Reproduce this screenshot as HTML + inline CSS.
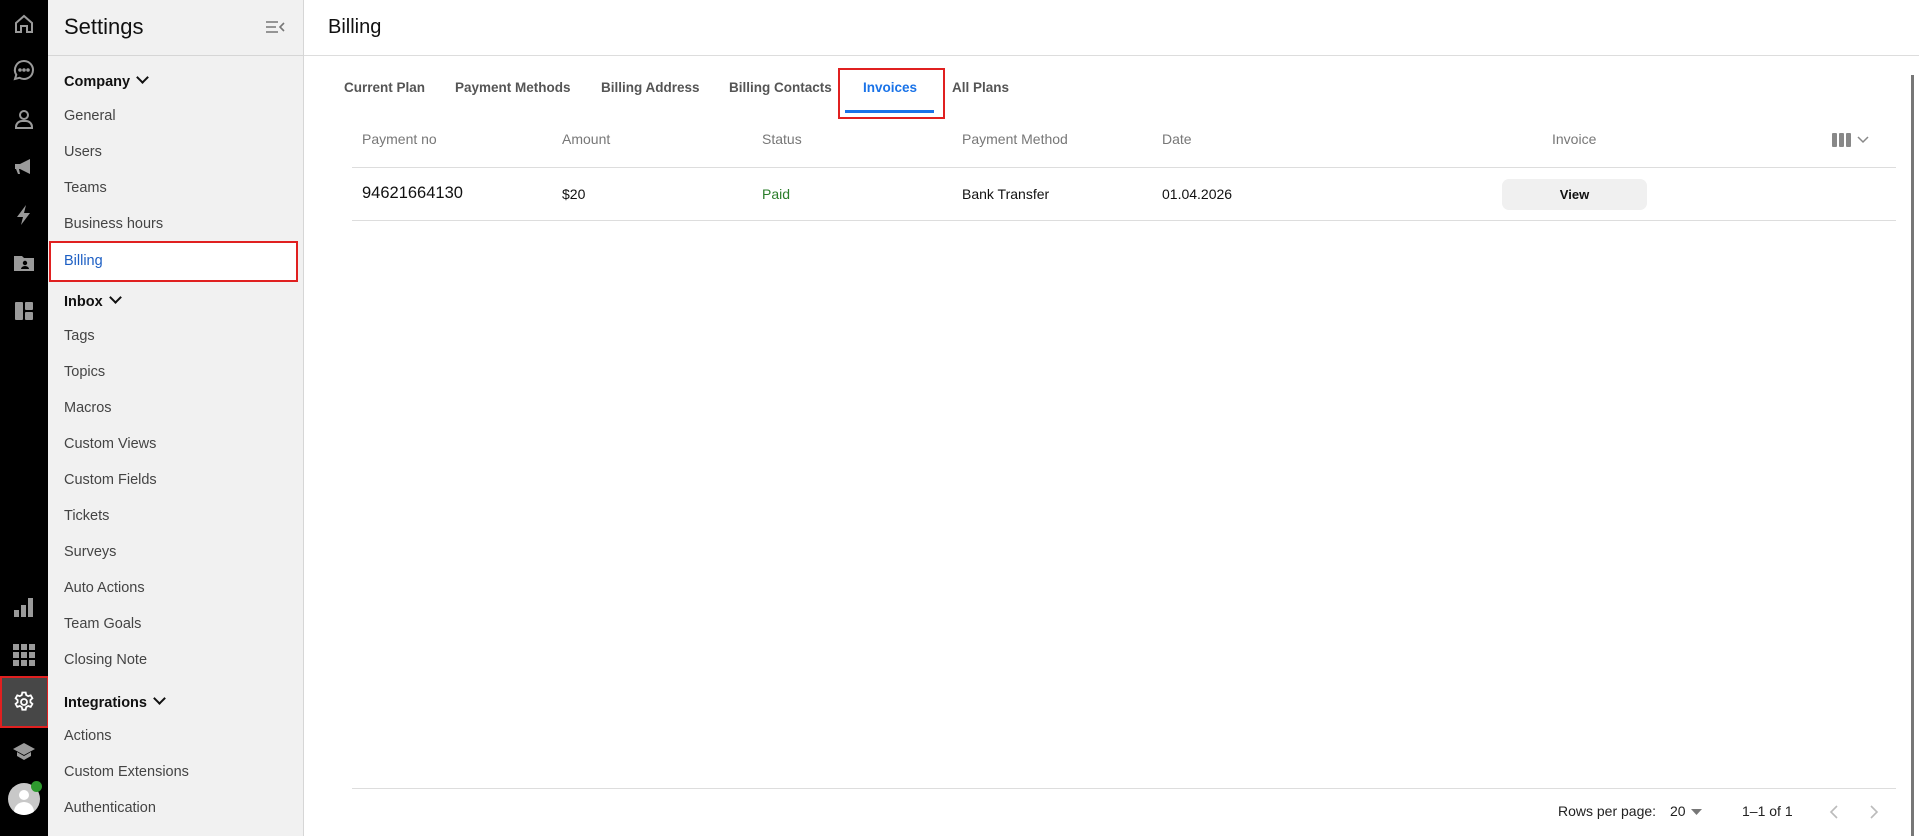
<!DOCTYPE html>
<html><head><meta charset="utf-8"><style>
*{box-sizing:border-box;margin:0;padding:0}
body{width:1919px;height:836px;overflow:hidden;font-family:"Liberation Sans",Arial,sans-serif;background:#fff;position:relative;color:#222}
.rail{position:absolute;left:0;top:0;width:48px;height:836px;background:#000}
.rail svg{position:absolute;left:12px}
.side{position:absolute;left:48px;top:0;width:256px;height:836px;background:#f1f1f1;border-right:1px solid #d6d6d6}
.side h1{position:absolute;left:16px;top:14px;font-size:22px;font-weight:normal;color:#111}
.side .hd{position:absolute;left:0;top:55px;width:255px;border-top:1px solid #d6d6d6}
.it{position:absolute;left:16px;font-size:14.5px;color:#444;transform:translateY(-50%)}
.sec{position:absolute;left:16px;font-size:14.5px;font-weight:bold;color:#111;transform:translateY(-50%)}
.sec:after{content:"";display:inline-block;width:7px;height:7px;border-right:2px solid #111;border-bottom:2px solid #111;transform:rotate(45deg);margin-left:8px;position:relative;top:-4px}
.abs{position:absolute}
.tab{position:absolute;top:80px;font-size:13.5px;font-weight:bold;color:#555}
.th{position:absolute;top:131px;font-size:14px;color:#777}
.td{position:absolute;top:186px;font-size:14px;color:#111}
.line{position:absolute;left:352px;width:1544px;border-top:1px solid #ddd}
</style></head><body>
<div class="rail">
<svg style="top:12px" width="24" height="24" viewBox="0 0 24 24" fill="none" stroke="#9a9a9a" stroke-width="2"><path d="M4 11L12 4l8 7v9h-5v-6H9v6H4z"/></svg>
<svg style="top:58px" width="24" height="24" viewBox="0 0 24 24" fill="none" stroke="#9a9a9a" stroke-width="2"><path d="M12 3a9 9 0 1 1-4.5 16.8L3 21l1.3-4.2A9 9 0 0 1 12 3z"/><circle cx="8" cy="12" r=".8" fill="#9a9a9a"/><circle cx="12" cy="12" r=".8" fill="#9a9a9a"/><circle cx="16" cy="12" r=".8" fill="#9a9a9a"/></svg>
<svg style="top:107px" width="24" height="24" viewBox="0 0 24 24" fill="none" stroke="#9a9a9a" stroke-width="2"><circle cx="12" cy="8" r="4"/><path d="M4 21v-1a6 6 0 0 1 6-6h4a6 6 0 0 1 6 6v1z"/></svg>
<svg style="top:155px" width="24" height="24" viewBox="0 0 24 24" fill="#9a9a9a"><path d="M3 9h5l10-5v15L8 14H7l1 5H6l-2-5H3z"/></svg>
<svg style="top:203px" width="24" height="24" viewBox="0 0 24 24" fill="#9a9a9a"><path d="M14 2L5 14h6l-2 8 9-12h-6z"/></svg>
<svg style="top:251px" width="24" height="24" viewBox="0 0 24 24" fill="#9a9a9a"><path d="M2 5h8l2 2h10v13H2z"/><circle cx="13" cy="12" r="2.2" fill="#000"/><path d="M9 18a4 3 0 0 1 8 0z" fill="#000"/></svg>
<svg style="top:299px" width="24" height="24" viewBox="0 0 24 24" fill="#9a9a9a"><rect x="3" y="3" width="8" height="18" rx="1"/><rect x="13" y="3" width="8" height="8" rx="1"/><rect x="13" y="13" width="8" height="8" rx="1"/></svg>
<svg style="top:595px" width="24" height="24" viewBox="0 0 24 24" fill="#9a9a9a"><rect x="2" y="15" width="5" height="7"/><rect x="9" y="10" width="5" height="12"/><rect x="16" y="3" width="5" height="19"/></svg>
<svg style="top:643px" width="24" height="24" viewBox="0 0 24 24" fill="#9a9a9a"><rect x="1" y="1" width="6" height="6"/><rect x="9" y="1" width="6" height="6"/><rect x="17" y="1" width="6" height="6"/><rect x="1" y="9" width="6" height="6"/><rect x="9" y="9" width="6" height="6"/><rect x="17" y="9" width="6" height="6"/><rect x="1" y="17" width="6" height="6"/><rect x="9" y="17" width="6" height="6"/><rect x="17" y="17" width="6" height="6"/></svg>
<div style="position:absolute;left:0;top:676px;width:49px;height:52px;background:#474747;border:2px solid #e02020"></div>
<svg style="top:690px" width="24" height="24" viewBox="0 0 24 24" fill="none" stroke="#fff" stroke-width="1.8"><circle cx="12" cy="12" r="3"/><path d="M10.3 2.5h3.4l.5 2.6 2 1.1 2.5-.9 1.7 3-2 1.7v2.2l2 1.7-1.7 3-2.5-.9-2 1.1-.5 2.6h-3.4l-.5-2.6-2-1.1-2.5.9-1.7-3 2-1.7v-2.2l-2-1.7 1.7-3 2.5.9 2-1.1z"/></svg>
<svg style="top:739px" width="24" height="24" viewBox="0 0 24 24" fill="#9a9a9a"><path d="M12 4L1 10l11 6 11-6z"/><path d="M5 13v4l7 4 7-4v-4l-7 4z"/></svg>
<div style="position:absolute;left:8px;top:783px;width:32px;height:32px;border-radius:50%;background:#c8c8c8;overflow:hidden"><div style="position:absolute;left:11px;top:7px;width:10px;height:10px;border-radius:50%;background:#fff"></div><div style="position:absolute;left:6px;top:19px;width:20px;height:14px;border-radius:10px 10px 0 0;background:#fff"></div></div>
<div style="position:absolute;left:31px;top:781px;width:11px;height:11px;border-radius:50%;background:#2e9a2e"></div>
</div>
<div class="side">
<h1>Settings</h1>
<svg style="position:absolute;left:217px;top:19px" width="20" height="16" viewBox="0 0 20 16" fill="none" stroke="#777" stroke-width="1.6"><path d="M1 3h12M1 8h10M1 13h12M19 4l-4 4 4 4"/></svg>
<div class="hd"></div>
<div class="sec" style="top:82px">Company</div>
<div class="it" style="top:116px">General</div>
<div class="it" style="top:152px">Users</div>
<div class="it" style="top:188px">Teams</div>
<div class="it" style="top:224px">Business hours</div>
<div style="position:absolute;left:1px;top:241px;width:249px;height:41px;border:2px solid #e02020;background:#fff"></div>
<div class="it" style="top:261px;color:#1d5fc4">Billing</div>
<div class="sec" style="top:302px">Inbox</div>
<div class="it" style="top:336px">Tags</div>
<div class="it" style="top:372px">Topics</div>
<div class="it" style="top:408px">Macros</div>
<div class="it" style="top:444px">Custom Views</div>
<div class="it" style="top:480px">Custom Fields</div>
<div class="it" style="top:516px">Tickets</div>
<div class="it" style="top:552px">Surveys</div>
<div class="it" style="top:588px">Auto Actions</div>
<div class="it" style="top:624px">Team Goals</div>
<div class="it" style="top:660px">Closing Note</div>
<div class="sec" style="top:703px">Integrations</div>
<div class="it" style="top:736px">Actions</div>
<div class="it" style="top:772px">Custom Extensions</div>
<div class="it" style="top:808px">Authentication</div>
</div>
<div class="abs" style="left:328px;top:16px;font-size:20px;color:#111">Billing</div>
<div class="abs" style="left:304px;top:55px;width:1615px;border-top:1px solid #ddd"></div>
<div class="tab" style="left:344px">Current Plan</div>
<div class="tab" style="left:455px">Payment Methods</div>
<div class="tab" style="left:601px">Billing Address</div>
<div class="tab" style="left:729px">Billing Contacts</div>
<div class="abs" style="left:838px;top:68px;width:107px;height:51px;border:2px solid #e02020"></div>
<div class="tab" style="left:863px;color:#1a73e8">Invoices</div>
<div class="abs" style="left:845px;top:110px;width:89px;height:3px;background:#1a73e8"></div>
<div class="tab" style="left:952px">All Plans</div>
<div class="th" style="left:362px">Payment no</div>
<div class="th" style="left:562px">Amount</div>
<div class="th" style="left:762px">Status</div>
<div class="th" style="left:962px">Payment Method</div>
<div class="th" style="left:1162px">Date</div>
<div class="th" style="left:1552px">Invoice</div>
<svg class="abs" style="left:1832px;top:132px" width="40" height="16" viewBox="0 0 40 16"><rect x="0" y="1" width="5" height="14" rx="1" fill="#888"/><rect x="7" y="1" width="5" height="14" rx="1" fill="#888"/><rect x="14" y="1" width="5" height="14" rx="1" fill="#888"/><path d="M26 5l5 5 5-5" fill="none" stroke="#888" stroke-width="1.5"/></svg>
<div class="line" style="top:167px"></div>
<div class="td" style="left:362px;font-size:16.5px;top:184px">94621664130</div>
<div class="td" style="left:562px">$20</div>
<div class="td" style="left:762px;color:#2a7d2a">Paid</div>
<div class="td" style="left:962px">Bank Transfer</div>
<div class="td" style="left:1162px">01.04.2026</div>
<div class="abs" style="left:1502px;top:179px;width:145px;height:31px;border-radius:7px;background:#f0f0f0;text-align:center;line-height:31px;font-size:13px;font-weight:bold;color:#111">View</div>
<div class="line" style="top:220px"></div>
<div class="line" style="top:788px"></div>
<div class="abs" style="left:1558px;top:803px;font-size:14px;color:#222">Rows per page:</div>
<div class="abs" style="left:1670px;top:803px;font-size:14px;color:#222">20</div>
<svg class="abs" style="left:1691px;top:809px" width="12" height="6"><path d="M0 0h11L5.5 6z" fill="#777"/></svg>
<div class="abs" style="left:1742px;top:803px;font-size:14px;color:#222">1–1 of 1</div>
<svg class="abs" style="left:1828px;top:804px" width="12" height="16" fill="none" stroke="#bbb" stroke-width="1.6"><path d="M9 2L3 8l6 6"/></svg>
<svg class="abs" style="left:1868px;top:804px" width="12" height="16" fill="none" stroke="#bbb" stroke-width="1.6"><path d="M3 2l6 6-6 6"/></svg>
<div class="abs" style="left:1911px;top:75px;width:3px;height:761px;background:#777"></div>
</body></html>
